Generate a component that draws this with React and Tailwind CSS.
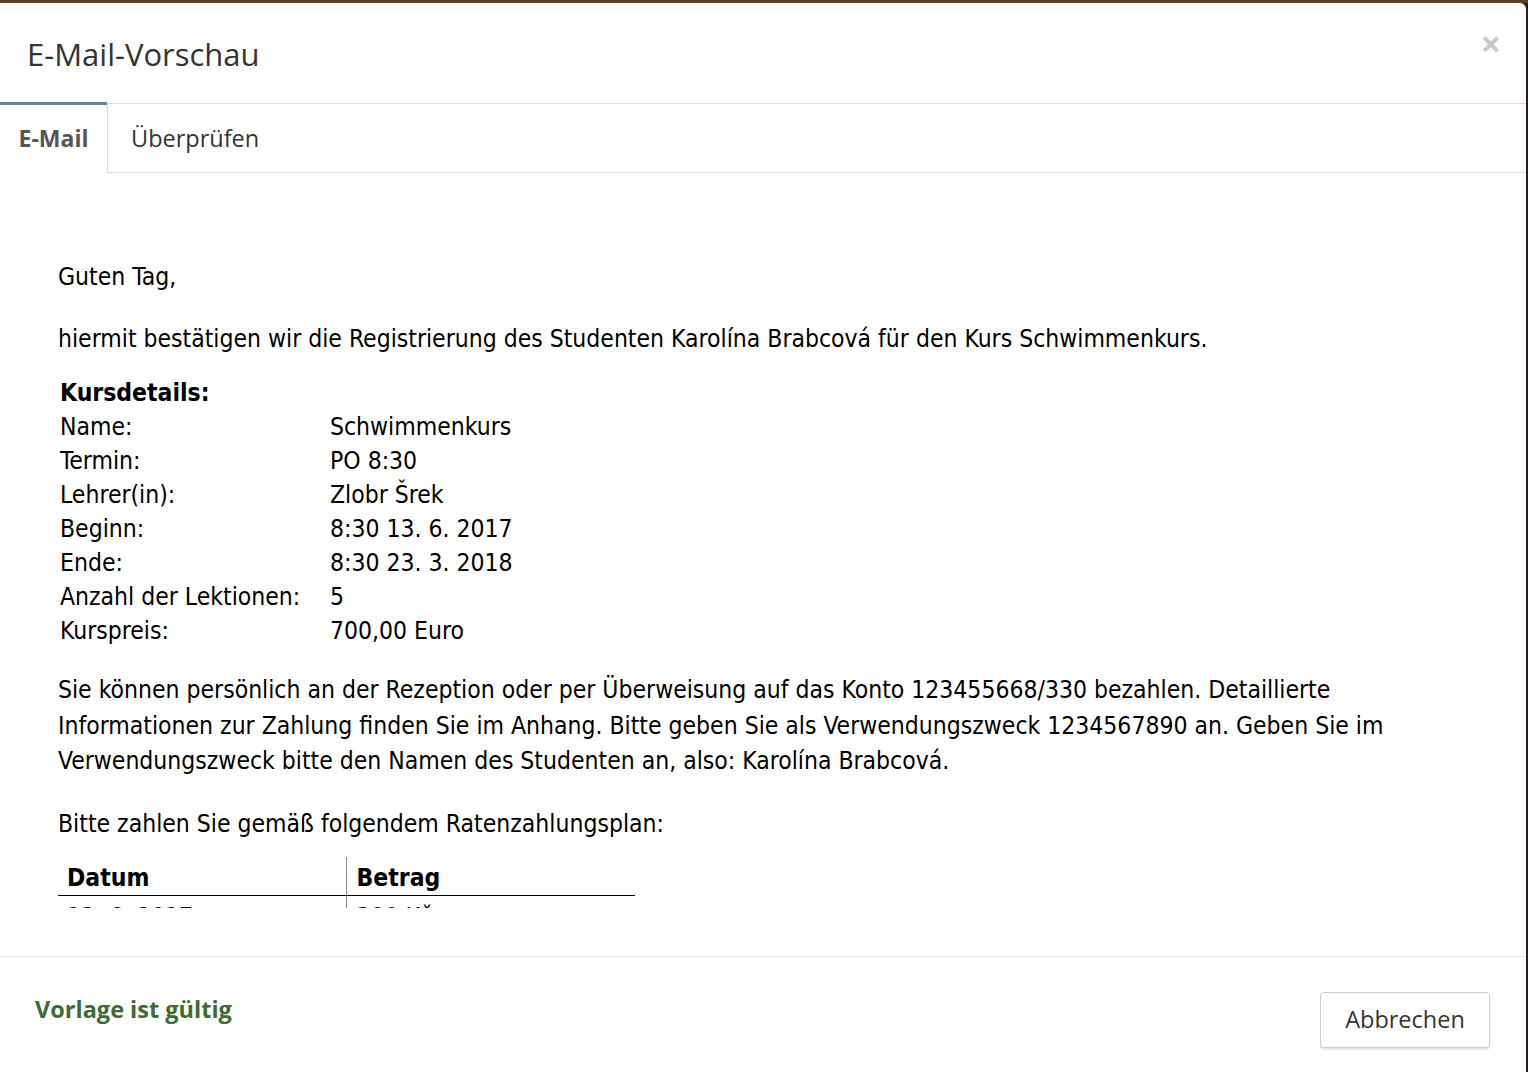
import React from "react";

const rows = [
  ["Name:", "Schwimmenkurs"],
  ["Termin:", "PO 8:30"],
  ["Lehrer(in):", "Zlobr Šrek"],
  ["Beginn:", "8:30 13. 6. 2017"],
  ["Ende:", "8:30 23. 3. 2018"],
  ["Anzahl der Lektionen:", "5"],
  ["Kurspreis:", "700,00 Euro"],
];

export default function App() {
  const mail = { fontFamily: '"DejaVu Sans Condensed", "DejaVu Sans", Tahoma, sans-serif' };
  const ui = { fontFamily: '"Open Sans", "Noto Sans", sans-serif' };
  return (
    <div className="w-[1528px] h-[1072px] bg-[#2e1d10] overflow-hidden">
      <div className="h-[3px] bg-[#5b3d22]" />
      <div className="w-[1526px] h-[1069px] bg-white rounded-tr-[6px] flex flex-col" style={ui}>
        {/* Header */}
        <div className="h-[100px] flex items-center justify-between pl-[27px] pr-[25px]">
          <h1 className="text-[31px] text-[#333] font-normal mt-[2px]">E-Mail-Vorschau</h1>
          <span className="text-[36px] font-bold text-[#c8c8c8] -mt-[18px] leading-none">×</span>
        </div>
        {/* Tabs */}
        <div className="flex h-[70px]">
          <div className="w-[107px] border-t-[3px] border-[#5f8596] flex items-center justify-center -mt-[1px] h-[71px]">
            <span className="text-[23px] font-bold text-[#555] -mt-[2px]">E-Mail</span>
          </div>
          <div className="flex-1 border border-r-0 border-[#dddddd] flex items-center pl-[23px]">
            <span className="text-[23.5px] text-[#333] mt-[2px]">Überprüfen</span>
          </div>
        </div>
        {/* Body */}
        <div className="h-[735px] overflow-hidden pl-[58px] pt-[86px] text-black text-[24.5px]" style={mail}>
          <p className="leading-[35.5px]">Guten Tag,</p>
          <p className="leading-[35.5px] mt-[26.5px] whitespace-nowrap">
            hiermit bestätigen wir die Registrierung des Studenten Karolína Brabcová für den Kurs Schwimmenkurs.
          </p>
          <table className="mt-[19.5px] ml-[2px] border-collapse leading-[34px]">
            <tbody>
              <tr className="h-[34px]">
                <td className="font-bold p-0" colSpan={2}>Kursdetails:</td>
              </tr>
              {rows.map(([k, v]) => (
                <tr key={k} className="h-[34px]">
                  <td className="p-0 w-[270px]">{k}</td>
                  <td className="p-0">{v}</td>
                </tr>
              ))}
            </tbody>
          </table>
          <p className="leading-[35.5px] mt-[24px] whitespace-nowrap">
            Sie können persönlich an der Rezeption oder per Überweisung auf das Konto 123455668/330 bezahlen. Detaillierte
            <br />
            Informationen zur Zahlung finden Sie im Anhang. Bitte geben Sie als Verwendungszweck 1234567890 an. Geben Sie im
            <br />
            Verwendungszweck bitte den Namen des Studenten an, also: Karolína Brabcová.
          </p>
          <p className="leading-[35.5px] mt-[27px]">Bitte zahlen Sie gemäß folgendem Ratenzahlungsplan:</p>
          <table className="mt-[16px] w-[577px] border-collapse leading-[34px]">
            <thead>
              <tr className="h-[38px]">
                <th className="w-[288px] text-left font-bold pl-[9px] pt-[4px] pb-0 border-b border-black border-r border-r-[#888]">Datum</th>
                <th className="text-left font-bold pl-[10px] pt-[4px] pb-0 border-b border-black">Betrag</th>
              </tr>
            </thead>
            <tbody>
              <tr className="h-[38px]">
                <td className="pl-[9px] pt-[4px] border-r border-[#888]">13. 6. 2017</td>
                <td className="pl-[10px] pt-[4px]">300 Kč</td>
              </tr>
            </tbody>
          </table>
        </div>
        {/* Footer */}
        <div className="mt-[48px] border-t border-[#e5e5e5] flex-1 flex items-center justify-between pl-[35px] pr-[36px]">
          <span className="text-[23.5px] font-bold text-[#3c6b34] -mt-[10px]">Vorlage ist gültig</span>
          <button className="w-[170px] h-[56px] border border-[#cccccc] rounded-[4px] bg-white text-[23.5px] text-[#333] shadow-[0_2px_0_#e6e6e6] mt-[11px]">
            Abbrechen
          </button>
        </div>
      </div>
    </div>
  );
}
